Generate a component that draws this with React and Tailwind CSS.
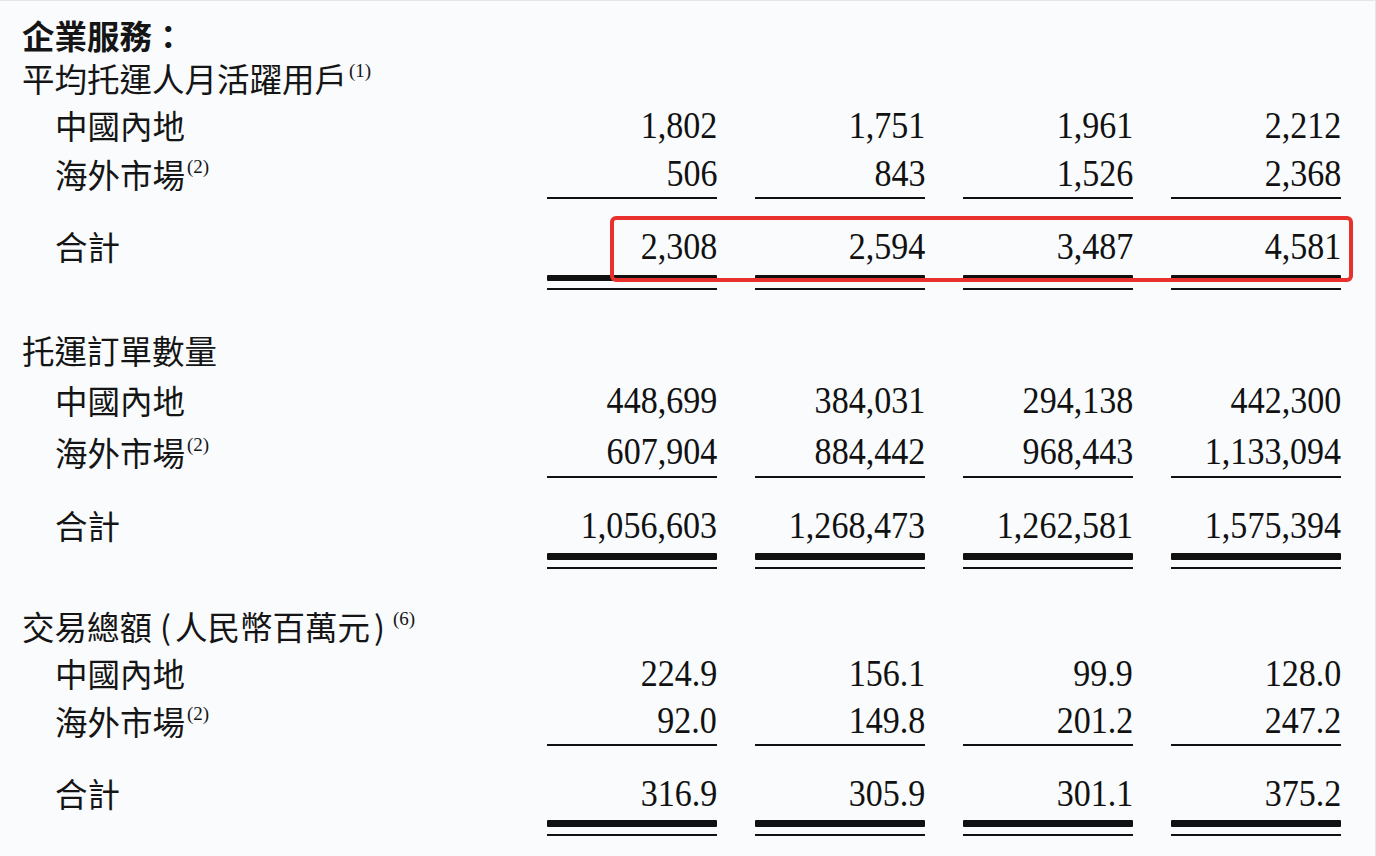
const CJK = { fontFamily: '"Noto Sans CJK TC", "Noto Sans CJK SC", sans-serif' }

const sections = [
  {
    gap: 'mt-0',
    title: '平均托運人月活躍用戶',
    note: '(1)',
    titleH: 'h-[46px]',
    rows: [
      { label: '中國內地', values: ['1,802', '1,751', '1,961', '2,212'], h: 'h-[48px]' },
      { label: '海外市場', note: '(2)', values: ['506', '843', '1,526', '2,368'], h: 'h-[50px]', line: true },
    ],
    total: { values: ['2,308', '2,594', '3,487', '4,581'], gap: 'mt-[19px]', h: 'h-[57px]', thick: 'h-[6px]' },
  },
  {
    gap: 'mt-[36px]',
    title: '托運訂單數量',
    titleH: 'h-[48px]',
    rows: [
      { label: '中國內地', values: ['448,699', '384,031', '294,138', '442,300'], h: 'h-[52px]' },
      { label: '海外市場', note: '(2)', values: ['607,904', '884,442', '968,443', '1,133,094'], h: 'h-[52px]', line: true },
    ],
    total: { values: ['1,056,603', '1,268,473', '1,262,581', '1,575,394'], gap: 'mt-[19px]', h: 'h-[56px]', thick: 'h-[7px]' },
  },
  {
    gap: 'mt-[33px]',
    title: (
      <>
        交易總額<span className="ml-[8px] mr-[4px]">(</span>人民幣百萬元<span className="ml-[4px] mr-[6px]">)</span>
      </>
    ),
    note: '(6)',
    titleH: 'h-[48px]',
    rows: [
      { label: '中國內地', values: ['224.9', '156.1', '99.9', '128.0'], h: 'h-[46px]' },
      { label: '海外市場', note: '(2)', values: ['92.0', '149.8', '201.2', '247.2'], h: 'h-[50px]', line: true },
    ],
    total: { values: ['316.9', '305.9', '301.1', '375.2'], gap: 'mt-[20px]', h: 'h-[54px]', thick: 'h-[7px]' },
  },
]

function Note({ children }) {
  return (
    <span className="relative -top-[8px] ml-[2px] font-['Liberation_Serif'] text-[19px] leading-none">{children}</span>
  )
}

function Num({ children }) {
  return (
    <span className="inline-block origin-right scale-x-[0.92] font-['Liberation_Serif'] text-[37px] leading-none text-[#111]">
      {children}
    </span>
  )
}

function Row({ label, note, values, h, line }) {
  return (
    <div className={`flex ${h}`}>
      <div className="flex w-[525px] items-center pl-[33px] text-[32.5px]" style={CJK}>
        {label}
        {note && <Note>{note}</Note>}
      </div>
      <div className="flex gap-[38px]">
        {values.map((v, i) => (
          <div
            key={i}
            className={`flex w-[170px] items-center justify-end ${line ? 'border-b-2 border-[#111]' : ''}`}
          >
            <Num>{v}</Num>
          </div>
        ))}
      </div>
    </div>
  )
}

function Total({ values, gap, h, thick }) {
  return (
    <div className={`flex items-start ${gap}`}>
      <div className={`flex ${h} w-[525px] items-center pl-[33px] text-[32.5px]`} style={CJK}>
        合計
      </div>
      <div className="flex gap-[38px]">
        {values.map((v, i) => (
          <div key={i} className="flex w-[170px] flex-col">
            <div className={`flex ${h} items-center justify-end`}>
              <Num>{v}</Num>
            </div>
            <div className={`${thick} rounded-[1px] bg-[#111]`} />
            <div className="mt-[7px] h-[2px] bg-[#111]" />
          </div>
        ))}
      </div>
    </div>
  )
}

export default function App() {
  return (
    <div className="relative h-[856px] w-[1376px] overflow-hidden border-t border-r border-[#e3e7ea] bg-[#f9fbfd] pt-[14px] pl-[22px] text-[#151515]">
      <div className="flex h-[40px] items-center text-[32.5px] font-bold" style={CJK}>
        企業服務：
      </div>

      {sections.map((s, i) => (
        <div key={i} className={s.gap}>
          <div className={`flex ${s.titleH} items-center text-[32.5px]`} style={CJK}>
            {s.title}
            {s.note && <Note>{s.note}</Note>}
          </div>
          {s.rows.map((r) => (
            <Row key={r.label} {...r} />
          ))}
          <Total {...s.total} />
        </div>
      ))}

      {/* highlight box */}
      <div className="absolute left-[610px] top-[215px] h-[66px] w-[743px] rounded-[6px] border-[4px] border-[#e8312c]" />
    </div>
  )
}
